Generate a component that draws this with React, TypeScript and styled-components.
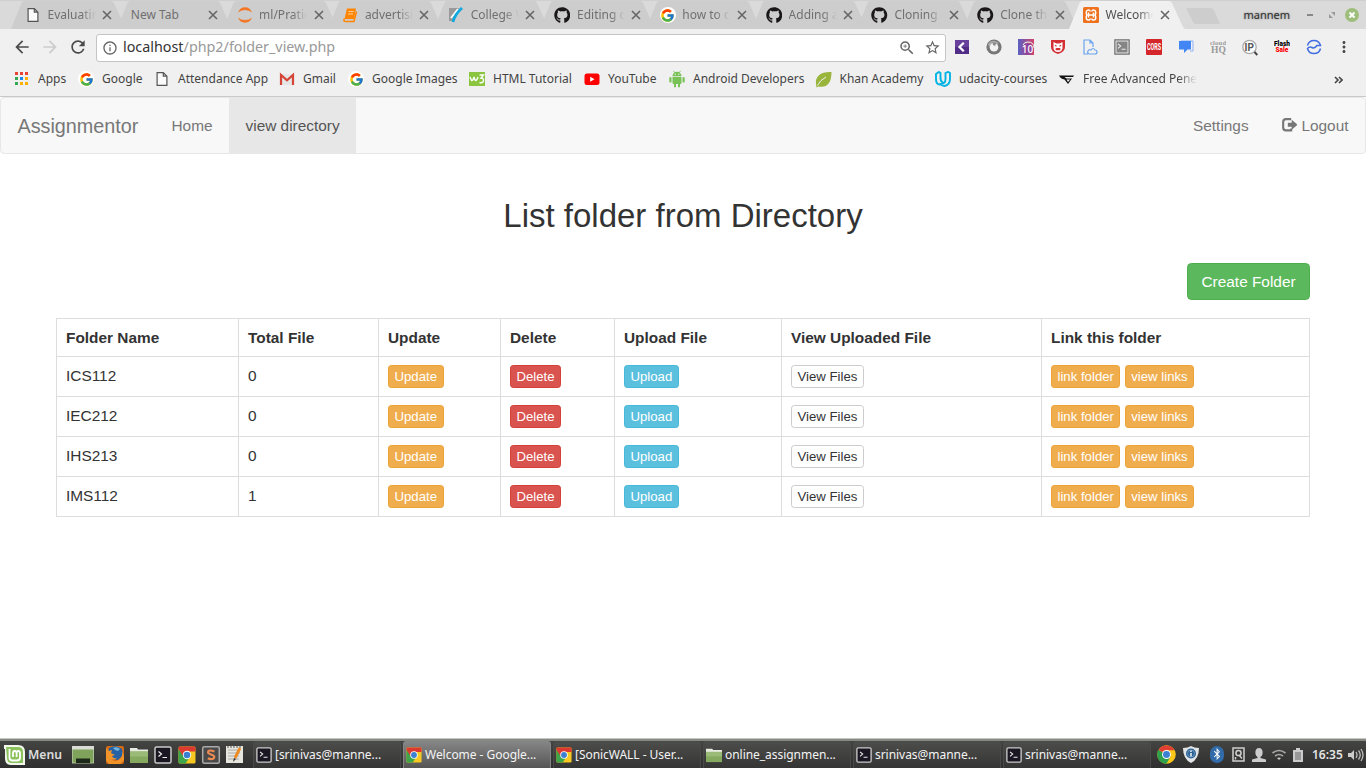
import React from 'react';
import styled, { createGlobalStyle, css } from 'styled-components';
import { FaGithub, FaBluetoothB } from 'react-icons/fa';
import { FcGoogle } from 'react-icons/fc';
import { MdArrowBack, MdArrowForward, MdRefresh, MdInfoOutline, MdZoomIn, MdStarBorder, MdMoreVert } from 'react-icons/md';

const Global = createGlobalStyle`
  * { box-sizing: border-box; }
  body { margin: 0; background: #fff; overflow: hidden; }
  svg { display: block; flex: none; }
`;

const Screen = styled.div`
  width: 1366px;
  height: 768px;
  display: flex;
  flex-direction: column;
  font-family: 'Liberation Sans', Arial, sans-serif;
  font-size: 15.4px;
  line-height: 22px;
  color: #333;
  background: #fff;
`;

/* ---------- browser chrome ---------- */
const Chrome = styled.header`
  height: 97px;
  flex: none;
  background: #f0f0f0;
  border-bottom: 1px solid #c9c9c9;
  font-family: 'Noto Sans', sans-serif;
  display: flex;
  flex-direction: column;
`;
const TabStrip = styled.div`
  height: 29px;
  padding-left: 11px;
  display: flex;
  background: #dadada;
  border-top: 1px solid #cfcfcf;
`;
const TabBox = styled.div<{ $active?: boolean }>`
  position: relative;
  z-index: ${p => (p.$active ? 2 : 1)};
  width: 105.8px;
  height: 28px;
  flex: none;
  display: flex;
  align-items: center;
  padding-left: 14px;
  font-size: 12px;
  color: ${p => (p.$active ? '#505050' : '#707070')};
`;
const TabShape = styled.svg`
  position: absolute;
  left: 0;
  top: 0;
  z-index: -1;
`;
const TabTitle = styled.span<{ $wide?: boolean; $fade?: boolean }>`
  margin-left: ${p => (p.$wide ? 0 : 6.5)}px;
  width: ${p => (p.$wide ? 71 : 48)}px;
  white-space: nowrap;
  overflow: hidden;
  ${p => p.$fade && css`mask-image: linear-gradient(to right, #000 70%, transparent 100%);`}
`;
const TabClose = styled.svg`
  margin-left: 6.5px;
`;
const NewTab = styled.svg`
  margin: 6px 0 0 11px;
`;
const WindowControls = styled.div`
  margin-left: auto;
  display: flex;
  align-items: center;
  font-size: 11px;
`;
const Owner = styled.span`
  margin-right: 12px;
  color: #333;
  text-shadow: 0 0 2px #777;
`;
const Toolbar = styled.div`
  height: 36px;
  display: flex;
  align-items: center;
  padding-left: 12px;
  color: #4a4a4a;
`;
const NavIcons = styled.div`
  width: 84px;
  display: flex;
  gap: 8px;
`;
const Omnibox = styled.div`
  width: 850px;
  height: 28px;
  margin-top: 1px;
  background: #fff;
  border: 1px solid #c4c4c4;
  border-radius: 3px;
  display: flex;
  align-items: center;
  padding: 0 4px 0 5px;
  font-size: 14.33px;
  color: #333;
`;
const Url = styled.span`
  flex: 1;
  margin: -2px 0 0 5px;
  i { font-style: normal; color: #999; }
`;
const OmniIcons = styled.div`
  display: flex;
  gap: 8px;
  color: #666;
`;
const Extensions = styled.div`
  margin-left: 8px;
  display: flex;
  gap: 16px;
  align-items: center;
`;
const Overflow = styled(MdMoreVert)`
  margin-left: 13px;
`;
const Bookmarks = styled.div`
  height: 28px;
  padding-left: 14px;
  display: flex;
  align-items: center;
  font-size: 12px;
  color: #444;
`;
const Bookmark = styled.div<{ $w: number; $gap?: number; $fade?: boolean }>`
  width: ${p => p.$w}px;
  flex: none;
  display: flex;
  align-items: center;
  gap: ${p => p.$gap ?? 8}px;
  white-space: nowrap;
  overflow: hidden;
  ${p => p.$fade && css`mask-image: linear-gradient(to right, #000 86%, transparent 100%);`}
`;
const More = styled.svg`
  margin: 1px 23px 0 auto;
`;
const GoogleDisc = styled.span`
  width: 16px;
  height: 16px;
  flex: none;
  border-radius: 50%;
  background: #fff;
  display: flex;
  align-items: center;
  justify-content: center;
`;

/* ---------- page ---------- */
const Navbar = styled.nav`
  height: 57px;
  flex: none;
  display: flex;
  background: #f8f8f8;
  border: 1px solid #e7e7e7;
  border-radius: 4px;
  color: #777;
`;
const Brand = styled.a`
  padding: 17px 16.5px;
  font-size: 19.8px;
`;
const NavLink = styled.a<{ $active?: boolean }>`
  padding: 17px 16.5px 0;
  display: flex;
  ${p => p.$active && css`color: #555; background: #e7e7e7;`}
`;
const NavRight = styled.div`
  margin-left: auto;
  display: flex;
`;
const LogoutIcon = styled.svg`
  margin-top: 3px;
`;
const Page = styled.main`
  flex: 1;
  padding: 44px 56px 0;
`;
const Title = styled.h2`
  margin: 0;
  font-size: 33px;
  line-height: 36px;
  font-weight: 500;
  text-align: center;
`;
const Actions = styled.div`
  margin: 29px 0 18px;
  display: flex;
  justify-content: flex-end;
`;
type Tone = 'warning' | 'danger' | 'info' | 'plain' | 'success';
const tones: Record<Tone, string[]> = {
  warning: ['#f0ad4e', '#eea236', '#fff'],
  danger: ['#d9534f', '#d43f3a', '#fff'],
  info: ['#5bc0de', '#46b8da', '#fff'],
  success: ['#5cb85c', '#4cae4c', '#fff'],
  plain: ['#fff', '#ccc', '#333'],
};
const Button = styled.button<{ $tone: Tone; $large?: boolean }>`
  font-family: inherit;
  font-size: ${p => (p.$large ? 15.4 : 13.2)}px;
  line-height: ${p => (p.$large ? 22 : 19)}px;
  height: ${p => (p.$large ? 37 : 23)}px;
  padding: ${p => (p.$large ? '0 13.4px' : '0 5.5px')};
  background: ${p => tones[p.$tone][0]};
  border: 1px solid ${p => tones[p.$tone][1]};
  color: ${p => tones[p.$tone][2]};
  border-radius: ${p => (p.$large ? 4.4 : 3.3)}px;
  white-space: nowrap;
`;
const Table = styled.table`
  width: 1254px;
  table-layout: fixed;
  border-collapse: collapse;
  th, td { border: 1px solid #ddd; text-align: left; vertical-align: top; }
  th { height: 38px; padding: 8px 9px 0; }
  td { height: 40px; padding: 8px 9px 0; }
`;
const ButtonPair = styled.div`
  display: flex;
  gap: 4.3px;
`;

/* ---------- desktop panel ---------- */
const Panel = styled.footer`
  height: 30px;
  flex: none;
  display: flex;
  align-items: center;
  background: linear-gradient(#454643, #2f2f2f);
  border-top: 1px solid #c4c6c2;
  box-shadow: inset 0 2px 0 #868984;
  padding-top: 2px;
  font-family: 'Noto Sans', sans-serif;
  font-size: 12px;
  color: #f4f4f4;
`;
const MenuButton = styled.div`
  width: 72px;
  padding-left: 4px;
  display: flex;
  align-items: center;
  gap: 3px;
  font-weight: 600;
  font-size: 12.2px;
  color: #ddd;
`;
const Launchers = styled.div`
  width: 181px;
  display: flex;
  align-items: center;
`;
const Launcher = styled.span<{ $first?: boolean }>`
  width: ${p => (p.$first ? 31 : 24)}px;
  display: flex;
  justify-content: ${p => (p.$first ? 'flex-start' : 'center')};
`;
const Task = styled.div<{ $active?: boolean }>`
  width: 148px;
  height: 27px;
  margin-right: 2px;
  padding-left: 2px;
  flex: none;
  display: flex;
  align-items: center;
  gap: 3px;
  white-space: nowrap;
  letter-spacing: -.04px;
  border-radius: 3px 3px 0 0;
  border: 1px solid ${p => (p.$active ? '#858585' : '#4a4a4a')};
  border-bottom: 0;
  background: ${p => (p.$active ? 'linear-gradient(#858585, #555)' : 'linear-gradient(#4c4c4a, #353535)')};
`;
const Tray = styled.div`
  margin-left: auto;
  padding-right: 2px;
  display: flex;
  align-items: center;
`;
const TrayItem = styled.div<{ $w: number }>`
  width: ${p => p.$w}px;
  flex: none;
`;
const Clock = styled.div`
  width: 36px;
  font-size: 12px;
  font-weight: 600;
  color: #e4e4e4;
`;

/* ---------- icons ---------- */
const Doc = () => (
  <svg width="16" height="16" viewBox="0 0 16 16" fill="#fafafa" stroke="#555" strokeWidth="1.200"><path d="M3.100 1.600h6.200l3.600 3.600v9.200H3.100zM9.300 1.600v3.600h3.600" /></svg>
);
const GoogleG = () => <GoogleDisc><FcGoogle size={15} /></GoogleDisc>;
const Github = () => <FaGithub size={16.500} color="#1b1718" />;
const Jupyter = () => (
  <svg width="16" height="16" viewBox="0 0 16 16" fill="#f37726"><path d="M1 5.500Q3 .3 8 .3T15 5.500Q12.500 3 8 3T1 5.500zM1 10.500Q3 15.700 8 15.700T15 10.500Q12.500 13 8 13T1 10.500z" /></svg>
);
const Book = () => (
  <svg width="16" height="16" viewBox="0 0 16 16"><path d="M5 1.500h9L12 12H2.500z" fill="#ff8500" /><path d="M6.700 4.500h5M6 7h5" stroke="#ffd09b" /><path d="M2.500 11.500q-1.500 3 .5 3h9l2.500-10" fill="none" stroke="#ff8500" strokeWidth="1.500" /></svg>
);
const College = () => (
  <svg width="16" height="16" viewBox="0 0 16 16"><path d="M1 1h10L4 14H1z" fill="#999" /><path d="M3 11L10 2" stroke="#fff" strokeWidth="2" /><path d="M5 15Q7 7 14 1" fill="none" stroke="#12a8e0" strokeWidth="2.800" /></svg>
);
const Xampp = () => (
  <svg width="16" height="16" viewBox="0 0 16 16"><rect width="16" height="16" rx="1.500" fill="#ee711e" /><path d="M7.200 4.500Q7 3 5.300 3T3.300 5v1.500q0 1.500 1.500 1.500-1.500 0-1.500 1.500V11q0 2 2 2t1.900-1.500M8.800 4.500Q9 3 10.700 3t2 2v1.500q0 1.500-1.500 1.500 1.500 0 1.500 1.500V11q0 2-2 2t-1.900-1.500M5.500 5.500v1.200q0 1.300 1.300 1.300h2.400q1.300 0 1.300-1.300V5.500M5.500 10.500V9.300Q5.500 8 6.800 8h2.400q1.300 0 1.300 1.300v1.200" fill="none" stroke="#fff" strokeWidth="1.500" /></svg>
);
const AppsGrid = () => (
  <svg width="16" height="16" viewBox="0 0 16 16">
    {['#ea4335', '#ea4335', '#ea4335', '#34a853', '#1a88f0', '#fbaf00', '#34a853', '#fbaf00', '#fbaf00'].map((c, i) => (
      <rect key={i} x={1 + (i % 3) * 5} y={1 + Math.floor(i / 3) * 5} width="3" height="3" fill={c} />
    ))}
  </svg>
);
const Gmail = () => (
  <svg width="16" height="16" viewBox="0 0 16 16"><path d="M1 3h14v11H1z" fill="#e6e6e6" /><path d="M2 14V4l6 5.300L14 4v10" fill="none" stroke="#d44437" strokeWidth="2.200" /></svg>
);
const W3 = () => (
  <svg width="16" height="16" viewBox="0 0 16 16"><rect y="1" width="16" height="14" fill="#8bc53f" /><path d="M1 6l1.500 3.500Q4 10 5 6q1 4 2 3.500T9 6M10.500 4h4L12 7q3 0 2.500 2.800-.8 2.700-4 1.700" fill="none" stroke="#fff" strokeWidth="1.400" /></svg>
);
const YouTube = () => (
  <svg width="16" height="16" viewBox="0 0 16 16"><rect x=".5" y="2.500" width="15" height="11.500" rx="2.500" fill="#f00" /><path d="M6.200 5.700v5l4.300-2.500z" fill="#fff" /></svg>
);
const Android = () => (
  <svg width="16" height="18" viewBox="0 0 16 18" fill="#78c257"><path d="M3.500 6a4.500 4.300 0 0 1 9 0zM3.500 6.800h9V13q0 1-1 1h-7q-1 0-1-1zM.3 7.500q1.100-1 2.200 0V12q-1.100 1-2.200 0zM13.500 7.500q1.100-1 2.200 0V12q-1.100 1-2.200 0zM5 13h2v4q-1 .8-2 0zM9 13h2v4q-1 .8-2 0z" /><path d="M4.500.8L6 3M11.500.8L10 3" stroke="#78c257" strokeWidth=".8" /><circle cx="6.200" cy="4.200" r=".6" fill="#fff" /><circle cx="9.800" cy="4.200" r=".6" fill="#fff" /></svg>
);
const Leaf = () => (
  <svg width="17" height="17" viewBox="0 0 17 17"><path d="M1 13C0 5 6 .5 16.500 1c0 12-5 16-13 14.500L1.500 16.500z" fill="#9ab53c" /><path d="M2.500 14.500Q5 9 11 6" fill="none" stroke="#f0f0f0" strokeWidth="1" /></svg>
);
const Udacity = () => (
  <svg width="16" height="16" viewBox="0 0 16 16" fill="none" stroke="#02b3e4" strokeWidth="1.900"><path d="M3.800 1L1 3v5q0 5.500 4 5.500 2.200-.3 2.800-2Q5.500 10.500 5.500 7V2zM10.500 2L13 .9 15 2v6q0 6-5.500 7-3-.3-3.500-2 4.500-.2 4.500-5z" /></svg>
);
const Wing = () => (
  <svg width="16" height="16" viewBox="0 0 16 16"><path d="M0 4.500h15l-1 1.500H5.500l2 1.500H13L9 13 5.500 8.500Q1.500 8 0 4.500z" fill="#111" /><path d="M7.500 8.500h3.700L9 11z" fill="#f0f0f0" /></svg>
);
const Terminal = ({ size = 18, gray = false }: { size?: number; gray?: boolean }) => (
  <svg width={size} height={size} viewBox="0 0 18 18"><rect x="1" y="1" width="16" height="16" rx={gray ? 0 : 1.500} fill={gray ? '#858585' : '#1b1722'} stroke={gray ? '#777' : '#c9c9c9'} strokeWidth="1.500" />{gray && <rect x="2.300" y="2.300" width="13.400" height="13.400" fill="none" stroke="#eee" />}<path d="M4.500 5.500l3 2.500-3 2.500M8.500 11.500h4.500" fill="none" stroke="#eee" strokeWidth="1.200" /></svg>
);
const ChromeLogo = ({ size = 18, square = false }: { size?: number; square?: boolean }) => (
  <svg width={size} height={size} viewBox="0 0 18 18">
    {square ? (
      <><rect x=".5" y=".5" width="17" height="17" rx="1.500" fill="#f6c821" /><path d="M.5 3l6 8 4 2-3 4.500H2A1.500 1.500 0 0 1 .5 16z" fill="#3da54a" /><path d="M2 .5h14a1.500 1.500 0 0 1 1.500 1.500v3.500H9L5 10 .5 3V2A1.500 1.500 0 0 1 2 .5z" fill="#dc3a30" /></>
    ) : (
      <><circle cx="9" cy="9" r="8.800" fill="#fbc718" /><path d="M9 9L1.400 4.600A8.800 8.800 0 0 0 9 17.800L12.800 11z" fill="#2fa04d" /><path d="M9 9L1.400 4.600A8.800 8.800 0 0 1 16.600 5H9z" fill="#e23f33" /></>
    )}
    <circle cx="9" cy="9" r="4.200" fill="#fff" /><circle cx="9" cy="9" r="3.300" fill="#3c80d1" />
  </svg>
);
const Folder = ({ size = 18 }: { size?: number }) => (
  <svg width={size} height={size} viewBox="0 0 18 18"><path d="M0 2h7l1 1.500h10V16H0z" fill="#e8ebe2" /><path d="M0 5.500h18V17H0z" fill="#86a960" /><path d="M0 5.500h18v5H0z" fill="#9abb77" /></svg>
);
const Desktop = () => (
  <svg width="22" height="18" viewBox="0 0 22 18"><rect x=".5" y="1" width="21" height="16" fill="#7fa35a" stroke="#a8bd92" /><path d="M0 0h22v3.500H0z" fill="#d8dcd4" /><path d="M4 12.500h14V17H4z" fill="#1c2818" /></svg>
);
const Mint = () => (
  <svg width="21" height="20" viewBox="0 0 21 20"><path d="M0 0h14q7 0 7 7v13H7q-6 0-6-7V4H0z" fill="#f3f7ed" /><path d="M2 2h12q5 0 5 5v11H8q-5 0-5-5z" fill="#8bc25e" /><path d="M5.500 4v8.500q0 3 3 3H13q3 0 3-3V8q0-2-1.700-2t-1.700 2v4M12.600 8q0-2-1.800-2T9 8v4" fill="none" stroke="#fff" strokeWidth="1.800" /></svg>
);
const Firefox = () => (
  <svg width="20" height="18" viewBox="0 0 20 18"><rect x="1" width="18" height="18" rx="2" fill="#d66b16" /><path d="M4 2q7-4 13 1l1 6-5 5-7-1-3-6z" fill="#2462a4" /><path d="M1 2l3 3 3-1-1 3 4 2-3 1q1 3 5 2-2 3-6 1 4 4 9 0 3-3 2-8l2 5v4l-4 4H4l-3-4z" fill="#f0942a" /><path d="M8 2q4-2 7 1l-2 2-3-1z" fill="#6fb4dd" /></svg>
);
const Sublime = () => (
  <svg width="20" height="18" viewBox="0 0 20 18"><rect x="1.700" y=".8" width="16.600" height="16.400" rx="1.500" fill="#4a4a4a" stroke="#aaa" strokeWidth="1.500" /><path d="M13.500 5.500q-6.500-2.300-6.500.7c0 2.600 6.300 1.800 6.300 4.600s-3.800 2.700-6.500 1.400" fill="none" stroke="#ed8b52" strokeWidth="2.100" /></svg>
);
const Editor = () => (
  <svg width="20" height="19" viewBox="0 0 20 19"><path d="M1 1h17v17H1z" fill="#e7e7df" /><path d="M3 5h11M3 8h12M3 11h11M3 14h11" stroke="#aaa" /><path d="M3 1v2M6 1v2M9 1v2M12 1v2M15 1v2" stroke="#555" /><path d="M10 13L15 3" stroke="#ed8b22" strokeWidth="2.800" /><path d="M8 17l1-4 2 1z" fill="#333" /></svg>
);
const Back = () => <svg width="16" height="16" viewBox="0 0 16 16"><rect x="1" y="1" width="14" height="14" fill="#67409c" /><path d="M1 8h14v7H1z" fill="#512d87" /><path d="M9.800 3.800L5.500 8l4.300 4.200" fill="none" stroke="#fff" strokeWidth="2.300" /></svg>;
const Ring = () => <svg width="16" height="16" viewBox="0 0 16 16"><circle cx="8" cy="8" r="7.600" fill="#777" /><path d="M2 5q4-6 11-1l-2 1q-5-2-8 3z" fill="#aaa" /><circle cx="8" cy="8.300" r="4.300" fill="#f2f2f2" /><path d="M6.500 3l4 1-1.500 3-2-1z" fill="#8c8c8c" /></svg>;
const Ten = () => <svg width="16" height="16" viewBox="0 0 16 16"><defs><linearGradient id="ten"><stop stopColor="#5960c4" /><stop offset="1" stopColor="#d5426b" /></linearGradient></defs><rect width="16" height="16" fill="url(#ten)" /><path d="M5 6q1-3 5-3 6 0 6 6" fill="none" stroke="#efe" strokeWidth="1" /><circle cx="10" cy="10" r="5.500" fill="#8e429e" /><text x="3.800" y="14" fontFamily="Noto Sans" fontSize="10" fill="#fff" fontWeight="500">10</text></svg>;
const Shield = () => <svg width="16" height="16" viewBox="0 0 16 16"><path d="M1 1h14v7q0 5-7 7-7-2-7-7z" fill="#d32f35" /><path d="M3.500 3l3 1.500h3l3-1.500v6.500q-1 3.500-4.500 3.500T3.500 9.500z" fill="#fff" /><path d="M5 6.300l1.500 1M11 6.300l-1.500 1" stroke="#d32f35" strokeWidth="1.200" /><rect x="5.500" y="9" width="5" height="2.300" rx="1" fill="#d32f35" /></svg>;
const DocCloud = () => <svg width="16" height="16" viewBox="0 0 16 16" fill="none" stroke="#6ba4ed" strokeWidth="1.200"><path d="M6 15H2V1h6l3 3v4M8 1v3h3M7 15q-2-1-1-3t3-1q2-3 4 0 2 0 2 2t-2 2z" /></svg>;
const Cors = () => <svg width="16" height="16" viewBox="0 0 16 16"><rect width="16" height="16" rx="1" fill="#d3252a" /><text x="1" y="11" fontFamily="Roboto" fontSize="8.500" fontWeight="700" fill="#fff" textLength="14" lengthAdjust="spacingAndGlyphs">CORS</text></svg>;
const Chat = () => <svg width="16" height="16" viewBox="0 0 16 16"><path d="M3 2h12v10h-3" fill="none" stroke="#8bb1fa" /><path d="M1 2h12v8.500H9.500L6 14v-3.500H1z" fill="#4285f4" /></svg>;
const CloudHq = () => <svg width="16" height="16" viewBox="0 0 16 16" fontFamily="Liberation Serif" fontWeight="700" fill="#999"><text x="0" y="5.500" fontSize="6.500" textLength="16">cloud</text><text x="1" y="14" fontSize="9.500">HQ</text></svg>;
const Ip = () => <svg width="16" height="17" viewBox="0 0 16 17"><circle cx="7.500" cy="8" r="6.700" fill="#fff" stroke="#aaa" strokeWidth="1.300" /><text x="2.500" y="11.500" fontFamily="Roboto" fontSize="10" fontWeight="700" fill="#555">IP</text><path d="M12.500 13l2.800 3" stroke="#444" strokeWidth="2" /></svg>;
const Flash = () => <svg width="16" height="16" viewBox="0 0 16 16" fontFamily="Roboto" fontWeight="900" fontSize="6.500"><text y="6.500" textLength="16">Flash</text><text x="1.500" y="13" fill="#f00">Sale</text></svg>;
const Wave = () => <svg width="16" height="16" viewBox="0 0 16 16" fill="none" stroke="#426de0" strokeWidth="1.500"><path d="M1.500 6.500a6.700 6.700 0 0 1 13 0H11Q8.500 10 6 8.500T1.500 9.500a6.700 6.700 0 0 0 13 0" /></svg>;
const Logout = () => <LogoutIcon width="15.500" height="14" viewBox="0 0 16 14" preserveAspectRatio="none"><path d="M9.500 1.200H4Q1.200 1.200 1.200 4v5.500q0 2.800 2.800 2.800h5.500V10.500" fill="none" stroke="#777" strokeWidth="2.200" /><path d="M6 4.800h4V1.800L16 6.800l-6 5V8.800H6z" fill="#777" /></LogoutIcon>;

const tabs = [
  { title: 'Evaluating', icon: <Doc /> }, { title: 'New Tab' }, { title: 'ml/Pratice', icon: <Jupyter /> },
  { title: 'advertising', icon: <Book /> }, { title: 'College W', icon: <College /> },
  { title: 'Editing or', icon: <Github /> }, { title: 'how to cl', icon: <GoogleG /> },
  { title: 'Adding a', icon: <Github /> }, { title: 'Cloning a', icon: <Github /> },
  { title: 'Clone the', icon: <Github /> }, { title: 'Welcome', icon: <Xampp />, active: true },
];
const bookmarks = [
  { w: 64, t: 'Apps', i: <AppsGrid /> }, { w: 76, t: 'Google', i: <GoogleG /> },
  { w: 125, t: 'Attendance App', i: <Doc /> }, { w: 69, t: 'Gmail', i: <Gmail /> },
  { w: 121, t: 'Google Images', i: <GoogleG /> }, { w: 115, t: 'HTML Tutorial', i: <W3 /> },
  { w: 85, t: 'YouTube', i: <YouTube /> }, { w: 146, t: 'Android Developers', i: <Android /> },
  { w: 120, t: 'Khan Academy', i: <Leaf />, gap: 7.5 }, { w: 124, t: 'udacity-courses', i: <Udacity /> },
  { w: 138, t: 'Free Advanced Penetration', i: <Wing />, fade: true },
];
const columns: [string, number][] = [['Folder Name', 182], ['Total File', 140], ['Update', 122], ['Delete', 114], ['Upload File', 167], ['View Uploaded File', 260], ['Link this folder', 268]];
const folders: [string, number][] = [['ICS112', 0], ['IEC212', 0], ['IHS213', 0], ['IMS112', 1]];
const launchers = [<Desktop />, <Firefox />, <Folder />, <Terminal />, <ChromeLogo square />, <Sublime />, <Editor />];
const tasks = [
  { t: '[srinivas@manne...', i: <Terminal size={16} /> }, { t: 'Welcome - Google...', i: <ChromeLogo size={16} square />, active: true },
  { t: '[SonicWALL - User...', i: <ChromeLogo size={16} square /> }, { t: 'online_assignmen...', i: <Folder size={16} /> },
  { t: 'srinivas@manne...', i: <Terminal size={16} /> }, { t: 'srinivas@manne...', i: <Terminal size={16} /> },
];

export default function App() {
  return (
    <Screen>
      <Global />
      <Chrome>
        <TabStrip>
          {tabs.map(tab => (
            <TabBox key={tab.title} $active={tab.active}>
              <TabShape width="118" height="28" viewBox="0 0 118 28">
                <path d="M0 28L10.500 2Q11.500 0 13.500 0H100Q102 0 103 2L114 26Q115 28 117 28z" fill={tab.active ? '#f0f0f0' : '#cdcdcd'} />
              </TabShape>
              {tab.icon && <span>{tab.icon}</span>}
              <TabTitle $wide={!tab.icon} $fade={!!tab.icon}>{tab.title}</TabTitle>
              <TabClose width="10" height="10" viewBox="0 0 10 10"><path d="M1 1l8 8M9 1L1 9" stroke="#666" strokeWidth="1.600" /></TabClose>
            </TabBox>
          ))}
          <NewTab width="36" height="18"><path d="M2 1h22q3 0 4 2l6 14H10q-2 0-3-2L1 3q-1-2 1-2z" fill="#cdcdcd" /></NewTab>
          <WindowControls>
            <Owner>mannem</Owner>
            <svg width="64" height="16" viewBox="0 0 64 16"><path d="M5 8h6" stroke="#888" strokeWidth="2" /><path d="M29 5h4v4zM27 7v4h4z" fill="#999" /><circle cx="50" cy="8" r="7" fill="#9dbf7b" /><path d="M47.500 5.500l5 5M52.500 5.500l-5 5" stroke="#fff" strokeWidth="2" /></svg>
          </WindowControls>
        </TabStrip>
        <Toolbar>
          <NavIcons><MdArrowBack size={20} /><MdArrowForward size={20} color="#ccc" /><MdRefresh size={20} /></NavIcons>
          <Omnibox>
            <MdInfoOutline size={16} color="#666" />
            <Url>localhost<i>/php2/folder_view.php</i></Url>
            <OmniIcons><MdZoomIn size={18} /><MdStarBorder size={17} /></OmniIcons>
          </Omnibox>
          <Extensions>
            <Back /><Ring /><Ten /><Shield /><DocCloud /><Terminal size={16} gray /><Cors /><Chat /><CloudHq /><Ip /><Flash /><Wave />
          </Extensions>
          <Overflow size={18} />
        </Toolbar>
        <Bookmarks>
          {bookmarks.map(b => <Bookmark key={b.t} $w={b.w} $gap={b.gap} $fade={b.fade}>{b.i}<span>{b.t}</span></Bookmark>)}
          <More width="9" height="8" viewBox="0 0 9 8" fill="none" stroke="#444" strokeWidth="1.600"><path d="M1 1l3 3-3 3M5 1l3 3-3 3" /></More>
        </Bookmarks>
      </Chrome>
      <Navbar>
        <Brand>Assignmentor</Brand>
        <NavLink>Home</NavLink>
        <NavLink $active>view directory</NavLink>
        <NavRight><NavLink>Settings</NavLink><NavLink><Logout />&nbsp;Logout</NavLink></NavRight>
      </Navbar>
      <Page>
        <Title>List folder from Directory</Title>
        <Actions><Button $tone="success" $large>Create Folder</Button></Actions>
        <Table>
          <colgroup>{columns.map(([name, w]) => <col key={name} width={w} />)}</colgroup>
          <thead><tr>{columns.map(([name]) => <th key={name}>{name}</th>)}</tr></thead>
          <tbody>
            {folders.map(([name, count]) => (
              <tr key={name}>
                <td>{name}</td>
                <td>{count}</td>
                <td><ButtonPair><Button $tone="warning">Update</Button></ButtonPair></td>
                <td><ButtonPair><Button $tone="danger">Delete</Button></ButtonPair></td>
                <td><ButtonPair><Button $tone="info">Upload</Button></ButtonPair></td>
                <td><ButtonPair><Button $tone="plain">View Files</Button></ButtonPair></td>
                <td><ButtonPair><Button $tone="warning">link folder</Button><Button $tone="warning">view links</Button></ButtonPair></td>
              </tr>
            ))}
          </tbody>
        </Table>
      </Page>
      <Panel>
        <MenuButton><Mint />Menu</MenuButton>
        <Launchers>{launchers.map((icon, i) => <Launcher key={i} $first={i === 0}>{icon}</Launcher>)}</Launchers>
        {tasks.map((t, i) => <Task key={i} $active={t.active}>{t.i}<span>{t.t}</span></Task>)}
        <Tray>
          <TrayItem $w={26}><ChromeLogo size={19} /></TrayItem>
          <TrayItem $w={27}><svg width="16" height="17" viewBox="0 0 16 17"><path d="M0 2q5 0 8-2 3 2 8 2 0 11-8 15Q0 13 0 2z" fill="#e1e5e8" /><circle cx="8" cy="7.500" r="5" fill="#2c6193" /><circle cx="8" cy="7.500" r="3.500" fill="none" stroke="#7fa9cf" strokeWidth=".7" /><path d="M8 4.500V6M8 7v3.500" stroke="#fff" strokeWidth="1.400" /></svg></TrayItem>
          <TrayItem $w={22}><svg width="14" height="17" viewBox="0 0 14 17"><rect width="14" height="17" rx="7" fill="#316ba9" /><FaBluetoothB x="1" y="2" size={12} color="#fff" /></svg></TrayItem>
          <TrayItem $w={20}><svg width="13" height="15" viewBox="0 0 13 15" fill="none" stroke="#d0d0d0" strokeWidth="1.500"><rect x="1" y="1" width="11" height="13" /><circle cx="6.500" cy="6" r="2.600" /><path d="M3.500 12.500V10M7 8l3 3.500" /></svg></TrayItem>
          <TrayItem $w={20}><svg width="14" height="14" viewBox="0 0 14 14" fill="#ccc"><ellipse cx="7" cy="4.500" rx="3.600" ry="4.500" /><path d="M5.500 8h3v2l5.500 1.500V14H0v-2.500L5.500 10z" /></svg></TrayItem>
          <TrayItem $w={21}><svg width="14" height="12" viewBox="0 0 14 12" fill="none" stroke="#aaa" strokeWidth="1.600"><path d="M.5 4q6.500-5 13 0M3 7q4-3 8 0" /><path d="M5 9q2-1 4 0l-2 2z" fill="#ccc" stroke="none" /></svg></TrayItem>
          <TrayItem $w={19}><svg width="10" height="14" viewBox="0 0 10 14"><path d="M3 0h4v2h3v12H0V2h3z" fill="#ccc" /><rect x="2" y="4" width="6" height="8" fill="#999" /></svg></TrayItem>
          <Clock>16:35</Clock>
          <svg width="16" height="14" viewBox="0 0 16 14"><path d="M0 5h3l3-3v10L3 9H0z" fill="#ccc" /><path d="M8 4q2 3 0 6M10.500 2.500q3.500 4.500 0 9M13 1q4 6 0 12" fill="none" stroke="#bbb" strokeWidth="1.300" /></svg>
        </Tray>
      </Panel>
    </Screen>
  );
}
